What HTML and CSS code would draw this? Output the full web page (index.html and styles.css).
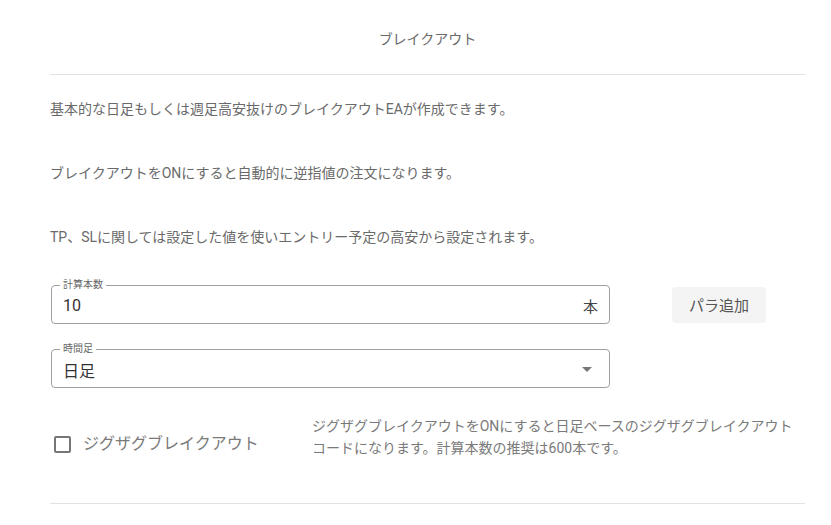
FILE: index.html
```html
<!DOCTYPE html>
<html lang="ja">
<head>
    <meta charset="UTF-8">
    <meta name="viewport" content="width=device-width, initial-scale=1.0">
    <title>ブレイクアウト</title>
    <link rel="stylesheet" href="styles.css">
</head>
<body>

    <!-- Breakout settings panel -->
    <div id="panel">
        <div class="panel-title">ブレイクアウト</div>
        <hr class="divider">

        <p class="note">基本的な日足もしくは週足高安抜けのブレイクアウトEAが作成できます。</p>
        <p class="note">ブレイクアウトをONにすると自動的に逆指値の注文になります。</p>
        <p class="note">TP、SLに関しては設定した値を使いエントリー予定の高安から設定されます。</p>

        <div class="form-row">
            <div class="field">
                <span class="field-label">計算本数</span>
                <span class="field-value">10</span>
                <span class="field-suffix">本</span>
            </div>
            <button class="para-btn">パラ追加</button>
        </div>

        <div class="form-row">
            <div class="field">
                <span class="field-label">時間足</span>
                <span class="field-value">日足</span>
                <span class="select-arrow"></span>
            </div>
        </div>

        <div class="check-row">
            <label class="check">
                <span class="check-box"></span>
                <span class="check-text">ジグザグブレイクアウト</span>
            </label>
            <p class="check-help">ジグザグブレイクアウトをONにすると日足ベースのジグザグブレイクアウトコードになります。計算本数の推奨は600本です。</p>
        </div>

        <hr class="divider">
    </div>

</body>
</html>
```

FILE: styles.css
```css
/* Breakout settings panel */
body {
    font-family: Roboto, "Noto Sans CJK JP", sans-serif;
    background-color: #fff;
    margin: 0;
    color: #6a6a6a;
}

#panel {
    margin: 0 26px 0 50px;
}

.panel-title {
    font-size: 14px;
    line-height: 22px;
    text-align: center;
    color: #6a6a6a;
    padding: 28px 0 24px;
}

.divider {
    border: none;
    border-top: 1px solid #e2e2e2;
    margin: 0;
}

.note {
    font-size: 14px;
    line-height: 22px;
    color: #6a6a6a;
    margin: 0 0 42px;
}

.note:first-of-type {
    margin-top: 23px;
}

.note:nth-of-type(3) {
    margin-bottom: 37px;
}

/* outlined fields */
.form-row {
    display: flex;
    align-items: center;
    margin-bottom: 25px;
}

.field {
    position: relative;
    box-sizing: border-box;
    width: 559px;
    height: 39px;
    margin-left: 1px;
    border: 1px solid #a0a0a0;
    border-radius: 4px;
    display: flex;
    align-items: center;
    padding: 2px 11px 0 11px;
}

.field-label {
    position: absolute;
    top: -7px;
    left: 8px;
    padding: 0 3px;
    background: #fff;
    font-size: 10px;
    line-height: 12px;
    color: #666;
}

.field-value {
    flex: 1;
    font-size: 16px;
    color: #333;
}

.field-suffix {
    font-size: 15px;
    color: #444;
}

.select-arrow {
    width: 0;
    height: 0;
    border-left: 5px solid transparent;
    border-right: 5px solid transparent;
    border-top: 5px solid #777;
    margin-right: 6px;
}

button.para-btn {
    margin-left: 62px;
    width: 94px;
    height: 36px;
    border: none;
    border-radius: 4px;
    background-color: #f4f4f4;
    color: #555;
    font-family: inherit;
    font-size: 15px;
    cursor: pointer;
}

/* zigzag checkbox row */
.check-row {
    display: flex;
    align-items: flex-start;
    margin-top: 27px;
    padding-bottom: 44px;
}

.check {
    width: 262px;
    display: flex;
    align-items: center;
    padding-top: 18px;
}

.check-box {
    box-sizing: border-box;
    width: 17px;
    height: 17px;
    margin-left: 4px;
    border: 2px solid #767676;
    border-radius: 2px;
}

.check-text {
    margin-left: 12px;
    font-size: 16px;
    line-height: 22px;
    color: #7a7a7a;
}

.check-help {
    flex: 1;
    margin: 0;
    font-size: 14px;
    line-height: 22px;
    color: #7a7a7a;
    padding-right: 4px;
}
```
